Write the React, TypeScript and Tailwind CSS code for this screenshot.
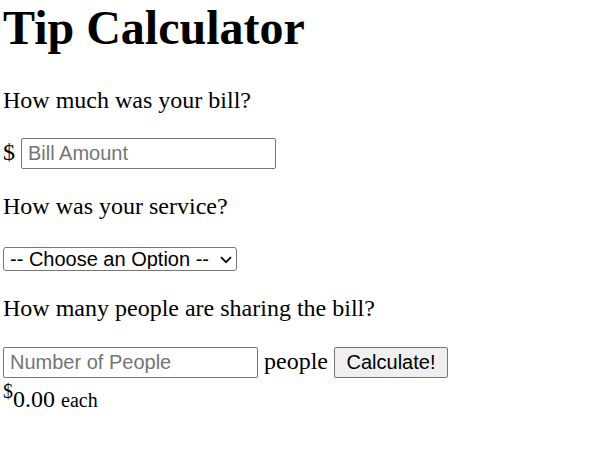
export default function App() {
	return (
		<div className="min-h-screen bg-white pl-[3px] font-['Liberation_Serif',serif] text-[24px] leading-[normal] text-black">
			<h1 className="mb-8 text-[48px] font-bold leading-[normal]">Tip Calculator</h1>

			<p className="mb-6">How much was your bill?</p>
			<div>
				${' '}
				<input
					className="h-[31px] w-[255px] rounded-[2px] border border-[#767676] px-[6px] font-['Liberation_Sans',Arial,sans-serif] text-[20px] placeholder-[#757575] focus:outline-none"
					placeholder="Bill Amount"
					type="text"
				/>
			</div>

			<p className="my-6">How was your service?</p>
			<div>
				<span className="relative inline-block align-middle">
					<select
						className="block h-[24px] w-[234px] appearance-none rounded-[3px] border border-[#767676] bg-white pl-[6px] font-['Liberation_Sans',Arial,sans-serif] text-[20px] leading-none focus:outline-none"
						defaultValue="0"
					>
						<option value="0" disabled>
							-- Choose an Option --
						</option>
						<option value="0.3">30% - Outstanding</option>
						<option value="0.2">20% - Good</option>
						<option value="0.15">15% - It was OK</option>
						<option value="0.1">10% - Bad</option>
						<option value="0.05">5% - Terrible</option>
					</select>
					<svg
						className="pointer-events-none absolute right-[5px] top-[9px]"
						width="12"
						height="8"
						viewBox="0 0 12 8"
						fill="none"
						stroke="#000"
						strokeWidth="1.7"
					>
						<polyline points="1,1.2 6,6.2 11,1.2" />
					</svg>
				</span>
			</div>

			<p className="my-6">How many people are sharing the bill?</p>
			<div className="pt-px">
				<input
					className="h-[31px] w-[255px] rounded-[2px] border border-[#767676] px-[6px] font-['Liberation_Sans',Arial,sans-serif] text-[20px] placeholder-[#757575] focus:outline-none"
					placeholder="Number of People"
					type="text"
				/>{' '}
				people{' '}
				<button className="h-[31px] w-[114px] rounded-[2px] border border-[#767676] bg-[#efefef] font-['Liberation_Sans',Arial,sans-serif] text-[20px]">
					Calculate!
				</button>
			</div>
			<div className="pt-[2px]">
				<sup className="static align-super text-[20px] leading-[normal]">$</sup>
				<span>0.00</span> <small className="text-[20px]">each</small>
			</div>
		</div>
	);
}
